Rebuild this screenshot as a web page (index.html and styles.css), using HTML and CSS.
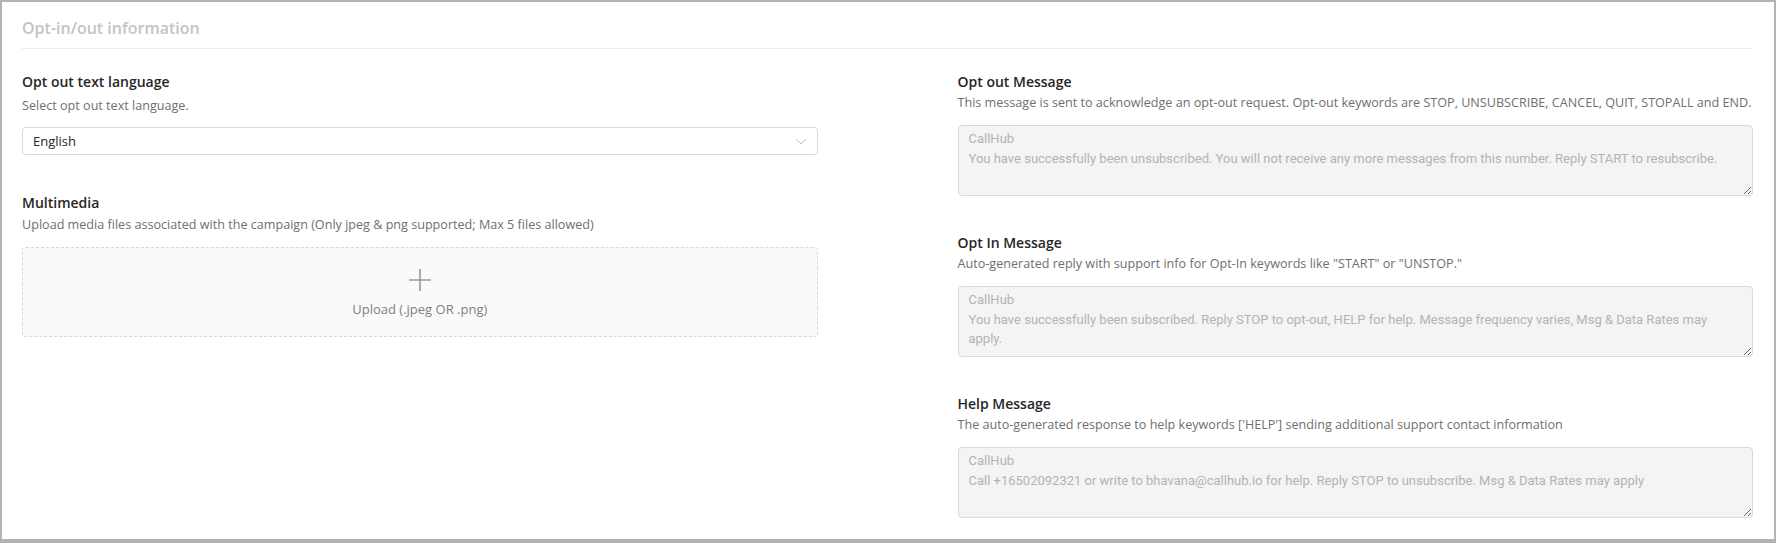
FILE: index.html
```html
<!DOCTYPE html>
<html lang="en">
<head>
    <meta charset="UTF-8">
    <meta name="viewport" content="width=device-width, initial-scale=1.0">
    <title>Opt-in/out information</title>
    <link rel="stylesheet" href="styles.css">
</head>
<body>
    <div class="panel">
        <h2 class="panel-title">Opt-in/out information</h2>
        <div class="panel-body">
            <div class="col">
                <div class="field field-select">
                    <div class="field-label">Opt out text language</div>
                    <div class="field-help">Select opt out text language.</div>
                    <div class="select">
                        <span>English</span>
                        <svg class="chevron" width="12" height="7" viewBox="0 0 12 7"><path d="M1 1 L6 6 L11 1" fill="none" stroke="#bdbdbd" stroke-width="1"/></svg>
                    </div>
                </div>
                <div class="field field-upload">
                    <div class="field-label">Multimedia</div>
                    <div class="field-help">Upload media files associated with the campaign (Only jpeg &amp; png supported; Max 5 files allowed)</div>
                    <div class="upload">
                        <svg class="plus" width="24" height="24" viewBox="0 0 24 24"><path d="M12 1 V23 M1 12 H23" fill="none" stroke="#9a9a9a" stroke-width="1.6"/></svg>
                        <div class="upload-text">Upload (.jpeg OR .png)</div>
                    </div>
                </div>
            </div>
            <div class="col">
                <div class="field">
                    <div class="field-label">Opt out Message</div>
                    <div class="field-help">This message is sent to acknowledge an opt-out request. Opt-out keywords are STOP, UNSUBSCRIBE, CANCEL, QUIT, STOPALL and END.</div>
                    <textarea class="msg" readonly>CallHub
You have successfully been unsubscribed. You will not receive any more messages from this number. Reply START to resubscribe.</textarea>
                </div>
                <div class="field">
                    <div class="field-label">Opt In Message</div>
                    <div class="field-help">Auto-generated reply with support info for Opt-In keywords like "START" or "UNSTOP."</div>
                    <textarea class="msg" readonly>CallHub
You have successfully been subscribed. Reply STOP to opt-out, HELP for help. Message frequency varies, Msg &amp; Data Rates may apply.</textarea>
                </div>
                <div class="field">
                    <div class="field-label">Help Message</div>
                    <div class="field-help">The auto-generated response to help keywords ['HELP'] sending additional support contact information</div>
                    <textarea class="msg" readonly>CallHub
Call +16502092321 or write to bhavana@callhub.io for help. Reply STOP to unsubscribe. Msg &amp; Data Rates may apply</textarea>
                </div>
            </div>
        </div>
    </div>
</body>
</html>
```

FILE: styles.css
```css
body {
    margin: 0;
    font-family: "Open Sans", Arial, sans-serif;
    background: #fff;
}
.panel {
    box-sizing: border-box;
    height: 543px;
    overflow: hidden;
    border: 2px solid #b3b3b3;
    border-bottom-width: 4px;
    padding: 15px 21px 0 20px;
}
.panel-title {
    margin: 0;
    font-size: 16px;
    line-height: 22px;
    font-weight: 600;
    color: #c4c4c4;
    padding-bottom: 9px;
    border-bottom: 1px solid #ececec;
}
.panel-body {
    display: grid;
    grid-template-columns: 1fr 1fr;
    column-gap: 140px;
    padding-top: 23px;
}
.field {
    margin-bottom: 37px;
}
.field-label {
    font-size: 14px;
    line-height: 20px;
    font-weight: 600;
    color: #262626;
    margin-bottom: 2px;
}
.field-help {
    font-size: 12.6px;
    line-height: 18px;
    color: #6f6f6f;
    margin-bottom: 13px;
    white-space: nowrap;
}
.field-select {
    margin-bottom: 38px;
}
.field-select .field-label {
    margin-bottom: 5px;
}
.field-select .field-help {
    margin-bottom: 12px;
}
.field-upload .field-label {
    margin-bottom: 3px;
}
.select {
    box-sizing: border-box;
    height: 28px;
    border: 1px solid #d9d9d9;
    border-radius: 4px;
    padding: 0 10px;
    display: flex;
    align-items: center;
    justify-content: space-between;
    font-size: 13px;
    color: #262626;
}
.upload {
    box-sizing: border-box;
    height: 90px;
    border: 1px dashed #d9d9d9;
    border-radius: 4px;
    background: #fafafa;
    display: flex;
    flex-direction: column;
    align-items: center;
    padding-top: 20px;
}
.upload-text {
    margin-top: 8px;
    font-size: 13px;
    line-height: 18px;
    color: #7f7f7f;
}
.msg {
    display: block;
    box-sizing: border-box;
    width: 100%;
    height: 71px;
    margin: 0;
    padding: 3px 10px;
    border: 1px solid #d9d9d9;
    border-radius: 4px;
    background: #f4f4f4;
    font-family: Roboto, Arial, sans-serif;
    font-size: 13px;
    line-height: 19.5px;
    color: #b3b3b3;
    resize: vertical;
    outline: none;
}
```
